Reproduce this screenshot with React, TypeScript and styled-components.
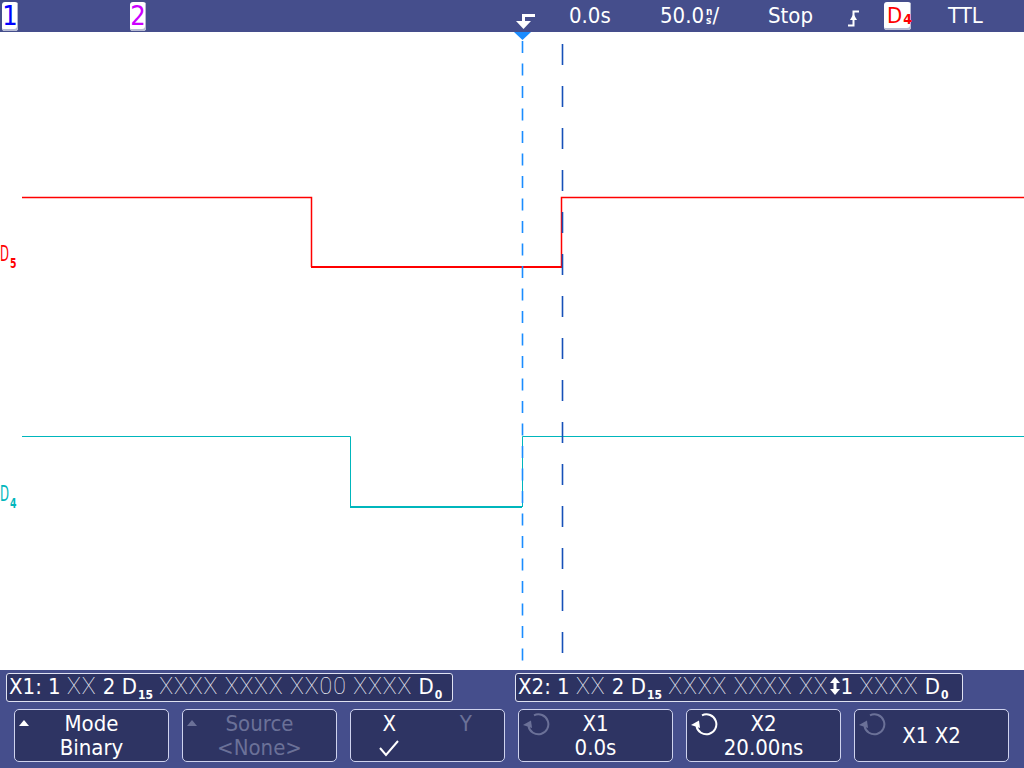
import styled, { createGlobalStyle } from "styled-components";

const GlobalStyle = createGlobalStyle`
  html, body {
    margin: 0;
    padding: 0;
    background: #454e8c;
  }
  body {
    font-family: "DejaVu Sans Condensed", "DejaVu Sans", "Liberation Sans", sans-serif;
  }
`;

const Screen = styled.div`
  width: 1024px;
  height: 768px;
  display: flex;
  flex-direction: column;
  background: #454e8c;
  color: #fff;
  overflow: hidden;
`;

const TopBar = styled.div`
  height: 32px;
  flex: none;
  display: flex;
  align-items: center;
  padding-left: 2px;
  box-sizing: border-box;
  font-size: 22px;
  line-height: 1;
`;

const Slot = styled.div<{ $w?: number }>`
  ${(p) => (p.$w ? `width: ${p.$w}px; flex: none;` : "flex: 1;")}
  height: 32px;
  display: flex;
  align-items: center;
`;

const ChanBox = styled.div<{ $color: string }>`
  width: 16px;
  height: 29px;
  box-sizing: border-box;
  background: #fff;
  border-radius: 3px;
  box-shadow: inset -1px -2px 0 #b6bad2;
  color: ${(p) => p.$color};
  font-size: 27px;
  display: flex;
  align-items: center;
  justify-content: center;
  padding-bottom: 2px;
`;

const TrigBox = styled.div`
  width: 27px;
  height: 28px;
  box-sizing: border-box;
  background: #fff;
  border-radius: 3px;
  box-shadow: inset -1px -2px 0 #b6bad2;
  color: #ff0000;
  font-size: 22px;
  display: flex;
  align-items: flex-start;
  padding: 3px 0 0 3px;
`;

const Sub = styled.span<{ $size?: number; $drop?: number }>`
  font-size: ${(p) => p.$size ?? 12}px;
  font-weight: bold;
  position: relative;
  top: ${(p) => p.$drop ?? 8}px;
  margin-left: 1px;
`;

const Stack = styled.span`
  display: inline-flex;
  flex-direction: column;
  font-size: 10px;
  font-weight: bold;
  line-height: 9px;
  margin: 0 0 0 2px;
`;

const Plot = styled.div`
  height: 638px;
  flex: none;
  background: #fff;
  svg {
    display: block;
  }
`;

const Bottom = styled.div`
  flex: 1;
  display: flex;
  flex-direction: column;
  padding-top: 3px;
  gap: 7px;
`;

const StatusRow = styled.div`
  display: flex;
  padding-left: 6px;
  gap: 62px;
`;

const StatusBox = styled.div<{ $w: number }>`
  width: ${(p) => p.$w}px;
  height: 29px;
  box-sizing: border-box;
  border: 1.5px solid #dfe2f2;
  border-radius: 3px;
  background: #2d3362;
  font-size: 22px;
  line-height: 26px;
  padding-left: 2px;
  white-space: pre;
  overflow: hidden;
`;

const Thin = styled.span`
  font-family: Roboto, "DejaVu Sans", sans-serif;
  font-weight: 100;
  font-size: 23px;
  letter-spacing: 1px;
  color: #f2f3fa;
`;

const SoftRow = styled.div`
  display: flex;
  padding-left: 14px;
  gap: 13px;
`;

const SoftKey = styled.div<{ $dim?: boolean }>`
  position: relative;
  width: 155px;
  height: 53px;
  box-sizing: border-box;
  border: 1.5px solid #cfd3ee;
  border-radius: 5px;
  background: #2e3463;
  color: ${(p) => (p.$dim ? "#6b7198" : "#fff")};
  font-size: 22px;
  line-height: 24px;
  display: flex;
  flex-direction: column;
  align-items: center;
  justify-content: center;
`;

const Split = styled.div`
  width: 100%;
  display: grid;
  grid-template-columns: 1fr 1fr;
  justify-items: center;
  align-items: center;
  grid-auto-rows: 24px;
`;

const Dim = styled.span`
  color: #6b7198;
`;

const Corner = styled.div`
  position: absolute;
  left: 3px;
  top: 2px;
  display: flex;
`;

function Triangle({ color }: { color: string }) {
  return (
    <Corner style={{ left: 4, top: 10 }}>
      <svg width="10" height="6" viewBox="0 0 10 6">
        <polygon points="0,6 10,6 5,0" fill={color} />
      </svg>
    </Corner>
  );
}

function Rotate({ color }: { color: string }) {
  return (
    <Corner>
      <svg width="28" height="26" viewBox="0 0 28 26">
        <path d="M6.5 14 A10 10 0 1 0 12 3.3" fill="none" stroke={color} strokeWidth="2" />
        <polygon points="1,13 9,8.5 10,16" fill={color} />
      </svg>
    </Corner>
  );
}

function UpDown() {
  return (
    <svg width="10" height="20" viewBox="0 0 10 20" style={{ margin: "0 1px", verticalAlign: "-2px" }}>
      <polygon points="5,1 10,7 0,7" fill="#fff" />
      <rect x="3.5" y="6" width="3" height="8" fill="#fff" />
      <polygon points="5,19 10,13 0,13" fill="#fff" />
    </svg>
  );
}

function Check() {
  return (
    <svg width="22" height="20" viewBox="0 0 22 20">
      <polyline points="2,10 8,17 20,3" fill="none" stroke="#fff" strokeWidth="2" />
    </svg>
  );
}

const labelFont = "DejaVu Sans Condensed, DejaVu Sans, sans-serif";

function ChanLabel({ y, color, n }: { y: number; color: string; n: string }) {
  return (
    <text x="0" y={y} fill={color} fontFamily={labelFont}>
      <tspan fontSize="22" textLength="9" lengthAdjust="spacingAndGlyphs">D</tspan>
      <tspan x="10" dy="7" fontSize="14" fontWeight="bold" textLength="6.5" lengthAdjust="spacingAndGlyphs">{n}</tspan>
    </text>
  );
}

export default function App() {
  return (
    <>
      <GlobalStyle />
      <Screen>
        <TopBar>
          <Slot $w={128}>
            <ChanBox $color="#0000ff">1</ChanBox>
          </Slot>
          <Slot $w={385}>
            <ChanBox $color="#cc00ff">2</ChanBox>
          </Slot>
          <Slot $w={54}>
            <svg width="22" height="32" viewBox="0 0 22 32">
              <rect x="8" y="14" width="12" height="3" fill="#fff" />
              <rect x="7" y="14" width="3" height="9" fill="#fff" />
              <polygon points="1,21 16,21 8.5,29" fill="#fff" />
            </svg>
          </Slot>
          <Slot $w={91}>0.0s</Slot>
          <Slot $w={108}>
            50.0
            <Stack>
              <span>n</span>
              <span>s</span>
            </Stack>
            /
          </Slot>
          <Slot $w={79}>Stop</Slot>
          <Slot $w={37}>
            <svg width="14" height="32" viewBox="0 0 14 32">
              <path d="M1 25.5 H6.5 V11.5 H12" fill="none" stroke="#fff" strokeWidth="2" />
              <polygon points="6.5,14 3,20 10,20" fill="#fff" />
            </svg>
          </Slot>
          <Slot $w={64}>
            <TrigBox>
              D<Sub $size={14} $drop={7}>4</Sub>
            </TrigBox>
          </Slot>
          <Slot>TTL</Slot>
        </TopBar>

        <Plot>
          <svg width="1024" height="638" viewBox="0 0 1024 638">
            {/* D5 */}
            <path d="M22 165.5 H311.5 V235" fill="none" stroke="#ff0000" strokeWidth="1.5" />
            <path d="M311 235 H562" fill="none" stroke="#ff0000" strokeWidth="2" />
            <path d="M561.5 235 V165.5 H1024" fill="none" stroke="#ff0000" strokeWidth="1.5" />
            <ChanLabel y={229} color="#ff0000" n="5" />
            {/* D4 */}
            <path d="M22 404.5 H350.5 V475" fill="none" stroke="#00b6bc" strokeWidth="1" />
            <path d="M350 475 H522" fill="none" stroke="#00b6bc" strokeWidth="2" />
            <path d="M522.5 475 V404.5 H1024" fill="none" stroke="#00b6bc" strokeWidth="1" />
            <ChanLabel y={469} color="#00b6bc" n="4" />
            {/* cursors */}
            <polygon points="514,0 531,0 522.5,8" fill="#1a8cff" />
            <line x1="522.5" y1="8" x2="522.5" y2="638" stroke="#1a8cff" strokeWidth="1.6" strokeDasharray="12 10.5" strokeDashoffset="-1" />
            <line x1="562.5" y1="0" x2="562.5" y2="638" stroke="#1650b8" strokeWidth="1.6" strokeDasharray="21 21" strokeDashoffset="30" />
          </svg>
        </Plot>

        <Bottom>
          <StatusRow>
            <StatusBox $w={447}>
              X1: 1 <Thin>XX</Thin> 2 D<Sub $size={12} $drop={5}>15</Sub> <Thin>XXXX XXXX XX00 XXXX</Thin> D<Sub $size={12} $drop={5}>0</Sub>
            </StatusBox>
            <StatusBox $w={448}>
              X2: 1 <Thin>XX</Thin> 2 D<Sub $size={12} $drop={5}>15</Sub> <Thin>XXXX XXXX XX</Thin><UpDown />1 <Thin>XXXX</Thin> D<Sub $size={12} $drop={5}>0</Sub>
            </StatusBox>
          </StatusRow>
          <SoftRow>
            <SoftKey>
              <Triangle color="#fff" />
              <span>Mode</span>
              <span>Binary</span>
            </SoftKey>
            <SoftKey $dim>
              <Triangle color="#6b7198" />
              <span>Source</span>
              <span>&lt;None&gt;</span>
            </SoftKey>
            <SoftKey>
              <Split>
                <span>X</span>
                <Dim>Y</Dim>
                <Check />
                <span />
              </Split>
            </SoftKey>
            <SoftKey>
              <Rotate color="#6b7198" />
              <span>X1</span>
              <span>0.0s</span>
            </SoftKey>
            <SoftKey>
              <Rotate color="#fff" />
              <span>X2</span>
              <span>20.00ns</span>
            </SoftKey>
            <SoftKey>
              <Rotate color="#6b7198" />
              <span>X1 X2</span>
            </SoftKey>
          </SoftRow>
        </Bottom>
      </Screen>
    </>
  );
}
